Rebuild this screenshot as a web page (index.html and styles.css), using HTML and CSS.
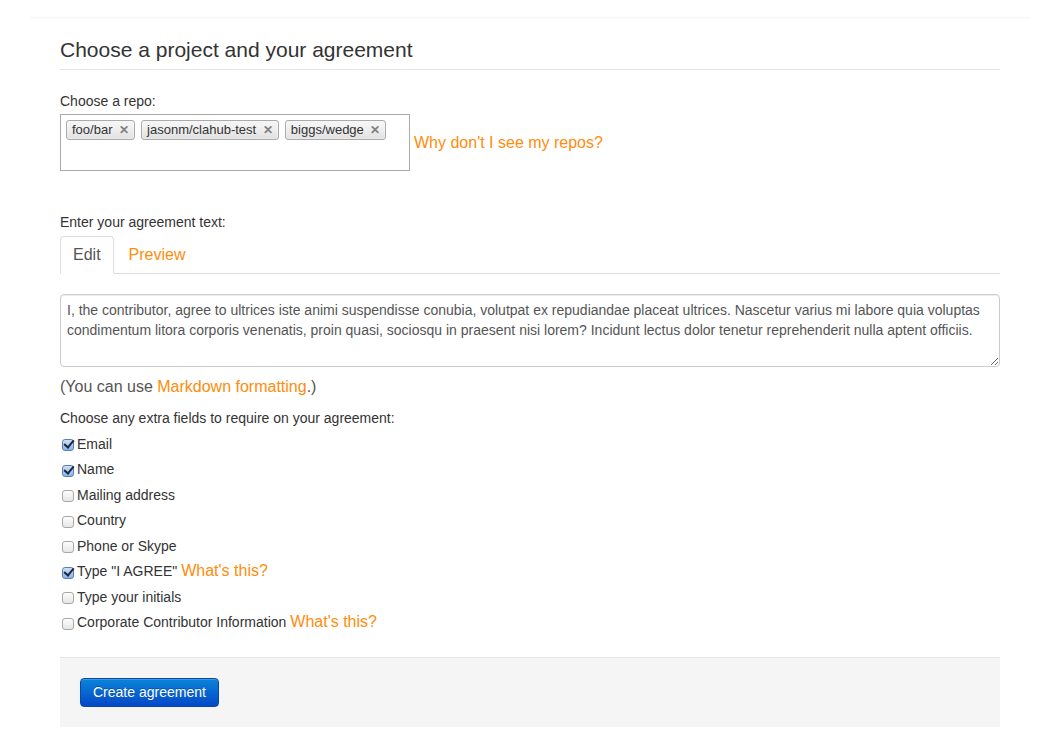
FILE: index.html
```html
<!DOCTYPE html>
<html>
<head>
<meta charset="utf-8">
<link rel="stylesheet" href="styles.css">
</head>
<body>
<div class="navbar"></div>
<div class="container">
  <h2 class="title">Choose a project and your agreement</h2>
  <div class="label">Choose a repo:</div>
  <div class="repo-row">
    <div class="repo-box">
      <span class="tag">foo/bar <b class="x">✕</b></span>
      <span class="tag">jasonm/clahub-test <b class="x">✕</b></span>
      <span class="tag">biggs/wedge <b class="x">✕</b></span>
    </div>
    <a class="link big" href="#">Why don't I see my repos?</a>
  </div>

  <div class="label label-text">Enter your agreement text:</div>
  <div class="tabs">
    <span class="tab active">Edit</span>
    <a class="tab link" href="#">Preview</a>
  </div>
  <textarea class="agreement" readonly>I, the contributor, agree to ultrices iste animi suspendisse conubia, volutpat ex repudiandae placeat ultrices. Nascetur varius mi labore quia voluptas condimentum litora corporis venenatis, proin quasi, sociosqu in praesent nisi lorem? Incidunt lectus dolor tenetur reprehenderit nulla aptent officiis.</textarea>
  <p class="help">(You can use <a class="link" href="#">Markdown formatting</a>.)</p>

  <div class="label">Choose any extra fields to require on your agreement:</div>
  <div class="fields">
    <label class="field"><span class="cb checked"></span>Email</label>
    <label class="field"><span class="cb checked"></span>Name</label>
    <label class="field"><span class="cb"></span>Mailing address</label>
    <label class="field"><span class="cb"></span>Country</label>
    <label class="field"><span class="cb"></span>Phone or Skype</label>
    <label class="field"><span class="cb checked"></span>Type "I AGREE" <a class="link big" href="#">What's this?</a></label>
    <label class="field"><span class="cb"></span>Type your initials</label>
    <label class="field"><span class="cb"></span>Corporate Contributor Information <a class="link big" href="#">What's this?</a></label>
  </div>

  <div class="form-actions">
    <button class="btn-primary">Create agreement</button>
  </div>
</div>
</body>
</html>
```
FILE: styles.css
```css
body {
  margin: 0;
  font-family: "Liberation Sans", Arial, sans-serif;
  font-size: 14px;
  line-height: 18px;
  color: #333;
  background: #fff;
}
.navbar {
  margin: 0 21px 0 30px;
  height: 17px;
  border-bottom: 1px solid #f6f6f6;
  box-shadow: 0 1px 2px rgba(0,0,0,0.02);
}
.container {
  width: 940px;
  margin-left: 60px;
}
.title {
  margin: 17px 0 0;
  padding-bottom: 4px;
  font-size: 21px;
  font-weight: normal;
  line-height: 30px;
  color: #333;
  border-bottom: 1px solid #e5e5e5;
}
.label {
  line-height: 18px;
  margin-top: 22px;
}
.link {
  color: #ff8c0a;
  text-decoration: none;
}
.big {
  font-size: 16px;
}
.repo-row {
  display: flex;
  align-items: center;
  margin-top: 4px;
}
.repo-box {
  box-sizing: border-box;
  width: 350px;
  height: 57px;
  border: 1px solid #aaa;
  padding: 5px 0 0 5px;
  display: flex;
  align-items: flex-start;
  gap: 6px;
  background: #fff;
  margin-right: 4px;
}
.tag {
  box-sizing: border-box;
  height: 20px;
  line-height: 18px;
  padding: 0 5px;
  font-size: 13px;
  border: 1px solid #aaa;
  border-radius: 3px;
  background: linear-gradient(#f4f4f4 20%, #ececec 55%, #e0e0e0);
  color: #333;
  white-space: nowrap;
  box-shadow: inset 0 0 2px #fff;
}
.tag .x {
  color: #808080;
  font-size: 12px;
  font-weight: bold;
  margin-left: 3px;
}
.label-text {
  margin-top: 42px;
}
.tabs {
  display: flex;
  margin-top: 5px;
  border-bottom: 1px solid #ddd;
  height: 37px;
}
.tab {
  box-sizing: border-box;
  height: 38px;
  padding: 0 12px;
  line-height: 36px;
  font-size: 16px;
  border: 1px solid transparent;
  border-radius: 4px 4px 0 0;
  margin-right: 2px;
}
.tab.active {
  color: #555;
  background: #fff;
  border-color: #ddd #ddd transparent;
}
.agreement {
  display: block;
  box-sizing: border-box;
  width: 940px;
  height: 73px;
  margin: 20px 0 0;
  padding: 5px 6px;
  border: 1px solid #ccc;
  border-radius: 4px;
  box-shadow: inset 0 1px 1px rgba(0,0,0,0.075);
  font-family: "Liberation Sans", Arial, sans-serif;
  font-size: 14px;
  line-height: 20px;
  color: #555;
  resize: both;
  outline: none;
}
.help {
  margin: 10px 0 0;
  font-size: 16px;
  line-height: 20px;
  color: #555;
}
.help + .label {
  margin-top: 12px;
}
.fields {
  margin-top: 4px;
  display: flex;
  flex-direction: column;
}
.field {
  display: flex;
  align-items: center;
  height: 25.5px;
  line-height: 18px;
}
.field .link {
  margin-left: 4px;
}
.cb {
  box-sizing: border-box;
  width: 12px;
  height: 12px;
  margin: 3px 3px 0 2px;
  border: 1px solid #a8a8a8;
  border-radius: 3px;
  background: linear-gradient(#fdfdfd, #e6e6e6);
  position: relative;
  flex: none;
}
.cb.checked {
  border-color: #5a7fb6;
  background: linear-gradient(#cfe0f6, #8db4e6);
}
.cb.checked::after {
  content: "";
  position: absolute;
  left: 3px;
  top: -2px;
  width: 4px;
  height: 8px;
  border: solid #1a2a44;
  border-width: 0 2px 2px 0;
  transform: rotate(40deg);
}
.form-actions {
  margin-top: 22px;
  background: #f5f5f5;
  border-top: 1px solid #e5e5e5;
  padding: 20px 20px 20px;
  height: 29px;
}
.btn-primary {
  box-sizing: border-box;
  height: 29px;
  padding: 0 12px;
  white-space: nowrap;
  font-family: "Liberation Sans", Arial, sans-serif;
  font-size: 14px;
  line-height: 27px;
  color: #fff;
  background: linear-gradient(#0a84d8, #0448c8);
  border: 1px solid #0a47a8;
  border-radius: 4px;
  text-shadow: 0 -1px 0 rgba(0,0,0,0.25);
  box-shadow: inset 0 1px 0 rgba(255,255,255,0.2);
}
```
